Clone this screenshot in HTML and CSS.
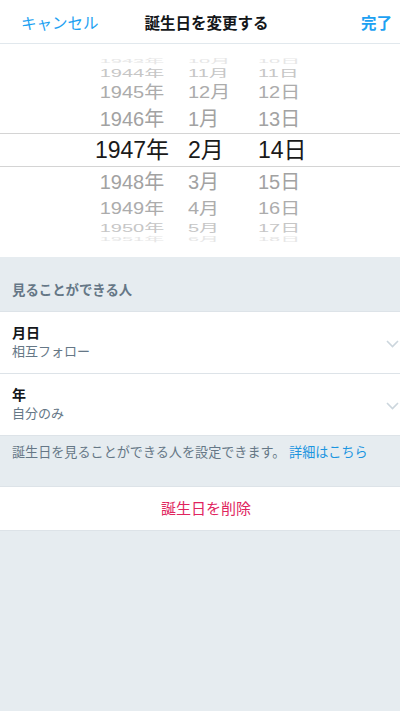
FILE: index.html
```html
<!DOCTYPE html>
<html lang="ja">
<head>
    <meta charset="UTF-8">
    <meta name="viewport" content="width=device-width, initial-scale=1.0">
    <title>誕生日を変更する</title>
    <link rel="stylesheet" href="styles.css">
</head>
<body>
    <header class="nav">
        <span class="nav-link">キャンセル</span>
        <h1 class="nav-title">誕生日を変更する</h1>
        <span class="nav-link nav-done">完了</span>
    </header>

    <div class="picker">
        <div class="wheel-row far-3"><span>1943年</span><span>10月</span><span>10日</span></div>
        <div class="wheel-row far-2"><span>1944年</span><span>11月</span><span>11日</span></div>
        <div class="wheel-row far-1"><span>1945年</span><span>12月</span><span>12日</span></div>
        <div class="wheel-row near"><span>1946年</span><span>1月</span><span>13日</span></div>
        <div class="wheel-row selected"><span>1947年</span><span>2月</span><span>14日</span></div>
        <div class="wheel-row near-b"><span>1948年</span><span>3月</span><span>15日</span></div>
        <div class="wheel-row far-1b"><span>1949年</span><span>4月</span><span>16日</span></div>
        <div class="wheel-row far-2b"><span>1950年</span><span>5月</span><span>17日</span></div>
        <div class="wheel-row far-3"><span>1951年</span><span>6月</span><span>18日</span></div>
    </div>

    <div class="section-head">見ることができる人</div>

    <div class="list">
        <div class="list-item">
            <div>
                <div class="item-title">月日</div>
                <div class="item-sub">相互フォロー</div>
            </div>
            <svg class="chevron" width="13" height="8" viewBox="0 0 13 8"><polyline points="1,1 6.5,6.5 12,1" fill="none" stroke="#ccd6dd" stroke-width="1.6"/></svg>
        </div>
        <div class="list-item">
            <div>
                <div class="item-title">年</div>
                <div class="item-sub">自分のみ</div>
            </div>
            <svg class="chevron" width="13" height="8" viewBox="0 0 13 8"><polyline points="1,1 6.5,6.5 12,1" fill="none" stroke="#ccd6dd" stroke-width="1.6"/></svg>
        </div>
    </div>

    <p class="note">誕生日を見ることができる人を設定できます。 <span class="note-link">詳細はこちら</span></p>

    <div class="delete">誕生日を削除</div>
</body>
</html>
```

FILE: styles.css
```css
/* ページ全体 */
body {
    margin: 0;
    background-color: #e6ecf0;
    font-family: "Liberation Sans", "Noto Sans CJK JP", sans-serif;
    color: #14171a;
    min-height: 711px;
}

.nav {
    display: grid;
    grid-template-columns: 1fr auto 1fr;
    align-items: center;
    height: 43px;
    padding: 0 8px 0 21px;
    background: #fff;
    border-bottom: 1px solid #e1e8ed;
    font-size: 15.5px;
}

.nav-link {
    color: #1da1f2;
}

.nav-done {
    justify-self: end;
    font-weight: bold;
}

.nav-title {
    margin: 0;
    font-size: 15.5px;
    font-weight: bold;
    color: #14171a;
}

/* ドラムロール */
.picker {
    background: #fff;
    height: 213px;
    padding-top: 13px;
    box-sizing: border-box;
    overflow: hidden;
}

.wheel-row {
    display: flex;
    align-items: center;
    padding-left: 80px;
    font-size: 20px;
    line-height: 1;
    color: #a2a2a2;
    overflow: hidden;
}

.wheel-row span {
    flex: none;
    white-space: nowrap;
}

.wheel-row span:nth-child(1) {
    width: 104px;
    text-align: center;
}

.wheel-row span:nth-child(2) {
    width: 70px;
    padding-left: 4px;
}

.far-3 { height: 8px; color: #e6e6e6; }
.far-3 span { transform: scaleY(0.28); }

.far-2 { height: 15px; color: #c6c6c6; }
.far-2 span { transform: scaleY(0.5); }

.far-1 { height: 24px; color: #acacac; }
.far-1 span { transform: scaleY(0.86); }

.near { height: 29px; }

.selected {
    height: 32px;
    border-top: 1px solid #d4d4d4;
    border-bottom: 1px solid #d4d4d4;
    font-size: 23px;
    color: #1a1a1a;
}

.near-b { height: 29px; }

.far-1b { height: 24px; color: #acacac; }
.far-1b span { transform: scaleY(0.8); }

.far-2b { height: 15px; color: #c6c6c6; }
.far-2b span { transform: scaleY(0.58); }

/* 公開範囲 */
.section-head {
    padding: 26px 12px 12px;
    line-height: 16px;
    font-size: 13.4px;
    font-weight: bold;
    color: #657786;
}

.list {
    background: #fff;
    border-top: 1px solid #dde3e8;
}

.list-item {
    display: flex;
    align-items: center;
    justify-content: space-between;
    height: 61px;
    padding: 0 1px 0 12px;
    border-bottom: 1px solid #dde3e8;
}

.item-title {
    font-size: 14px;
    font-weight: bold;
    line-height: 19px;
    color: #14171a;
}

.item-sub {
    font-size: 13px;
    line-height: 18px;
    color: #657786;
}

.chevron {
    margin-top: 3px;
}

.note {
    margin: 0;
    padding: 9px 12px 25px;
    line-height: 16px;
    font-size: 13.1px;
    color: #657786;
}

.note-link {
    color: #1b95e0;
}

.delete {
    background: #fff;
    height: 43px;
    line-height: 43px;
    padding-left: 12px;
    border-top: 1px solid #dde3e8;
    border-bottom: 1px solid #dde3e8;
    text-align: center;
    font-size: 15px;
    color: #e0245e;
}
```
